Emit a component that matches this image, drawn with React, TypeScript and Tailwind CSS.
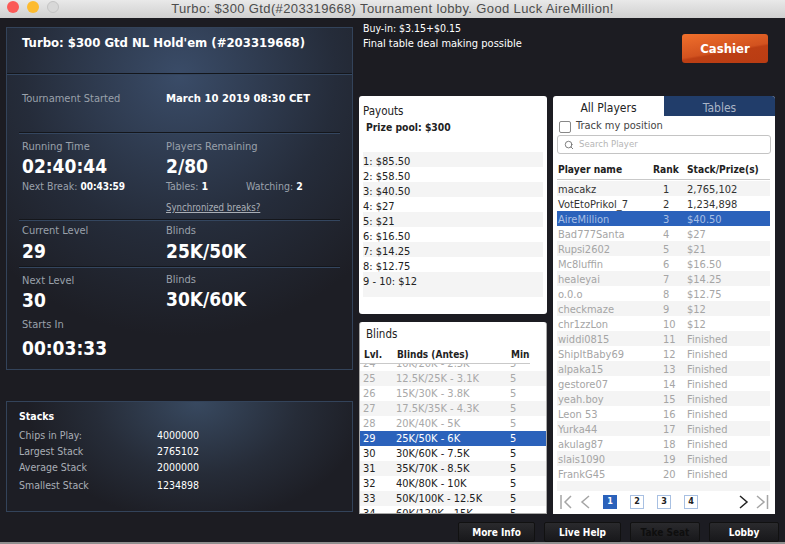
import React from "react";
import { Search } from "lucide-react";

const font = "font-['DejaVu_Sans_Condensed','DejaVu_Sans',sans-serif]";

const payouts = ["1: $85.50", "2: $58.50", "3: $40.50", "4: $27", "5: $21", "6: $16.50", "7: $14.25", "8: $12.75", "9 - 10: $12"];

const blinds = [
  ["24", "10K/20K - 2.5K"],
  ["25", "12.5K/25K - 3.1K"],
  ["26", "15K/30K - 3.8K"],
  ["27", "17.5K/35K - 4.3K"],
  ["28", "20K/40K - 5K"],
  ["29", "25K/50K - 6K"],
  ["30", "30K/60K - 7.5K"],
  ["31", "35K/70K - 8.5K"],
  ["32", "40K/80K - 10K"],
  ["33", "50K/100K - 12.5K"],
  ["34", "60K/120K - 15K"],
];

const players = [
  ["macakz", "2,765,102"],
  ["VotEtoPrikol_7", "1,234,898"],
  ["AireMillion", "$40.50"],
  ["Bad777Santa", "$27"],
  ["Rupsi2602", "$21"],
  ["Mc8luffin", "$16.50"],
  ["healeyai", "$14.25"],
  ["o.0.o", "$12.75"],
  ["checkmaze", "$12"],
  ["chr1zzLon", "$12"],
  ["widdi0815", "Finished"],
  ["ShipItBaby69", "Finished"],
  ["alpaka15", "Finished"],
  ["gestore07", "Finished"],
  ["yeah.boy", "Finished"],
  ["Leon 53", "Finished"],
  ["Yurka44", "Finished"],
  ["akulag87", "Finished"],
  ["slais1090", "Finished"],
  ["FrankG45", "Finished"],
];

function Divider() {
  return <div className="mx-[12px] h-[2px] shrink-0 border-t border-[#14161b] border-b border-b-[#34465f]" />;
}

function Label({ children }: { children: React.ReactNode }) {
  return <div className="text-[11px] leading-[14px] text-[#9aa1ab]">{children}</div>;
}

function Big({ children }: { children: React.ReactNode }) {
  return <div className="text-[19px] leading-[24px] font-bold text-white">{children}</div>;
}

function Stack({ label, value, cls }: { label: string; value: string; cls: string }) {
  return (
    <div className={`flex text-[10.5px] leading-[14px] ${cls}`}>
      <span className="w-[138px] text-[#a9aeb6]">{label}</span>
      <span className="text-white">{value}</span>
    </div>
  );
}

function FootButton({ label, cls }: { label: string; cls: string }) {
  return (
    <div className={`flex h-[20px] items-center justify-center rounded-[2px] border border-[#111] bg-gradient-to-b from-[#2a2a2d] to-[#18181b] text-[10px] ${cls}`}>
      {label}
    </div>
  );
}

export default function App() {
  return (
    <div className={`flex h-[544px] w-[785px] flex-col overflow-hidden bg-[#1c1c22] ${font}`}>
      {/* title bar */}
      <div className="relative flex h-[18px] shrink-0 items-center justify-center bg-gradient-to-b from-[#e9e9e9] to-[#d0d0d0] pb-[1px] font-['Liberation_Sans',sans-serif] text-[13px] tracking-[0.37px] text-[#4d4d4d]">
        <div className="absolute left-[7px] top-[1px] flex gap-[8px]">
          <span className="h-[12px] w-[12px] rounded-full bg-[#fb5a57]" />
          <span className="h-[12px] w-[12px] rounded-full bg-[#fdbb2f]" />
          <span className="h-[12px] w-[12px] rounded-full border border-[#c4c4c4] bg-[#d8d8d8]" />
        </div>
        Turbo: $300 Gtd(#203319668) Tournament lobby. Good Luck AireMillion!
      </div>

      <div className="flex min-h-0 flex-1">
        {/* left column */}
        <div className="ml-[6px] flex w-[347px] shrink-0 flex-col pt-[9px]">
          <div className="flex h-[343px] flex-col border border-[#33435a] bg-[radial-gradient(ellipse_260px_260px_at_50%_14%,#3a4c68_0%,#252c3a_60%,#1d1e25_100%)]">
            <div className="h-[45px] shrink-0 pl-[15px] pt-[6px] text-[13px] leading-[18px] font-bold text-white">
              Turbo: $300 Gtd NL Hold'em (#203319668)
            </div>
            <div className="h-[2px] shrink-0 border-t border-[#14161b] border-b border-b-[#34465f]" />
            <div className="flex h-[57px] shrink-0 pl-[15px] pt-[17px]">
              <div className="w-[144px]"><Label>Tournament Started</Label></div>
              <div className="text-[11.2px] leading-[14px] font-bold text-white">March 10 2019 08:30 CET</div>
            </div>
            <Divider />
            <div className="flex h-[85px] shrink-0 pl-[15px] pt-[6px]">
              <div className="w-[144px]">
                <Label>Running Time</Label>
                <Big>02:40:44</Big>
                <div className="pt-[1px] text-[10.5px] leading-[14px] text-[#9aa1ab]">
                  Next Break: <span className="text-[10px] font-bold text-white">00:43:59</span>
                </div>
              </div>
              <div className="w-[170px]">
                <Label>Players Remaining</Label>
                <Big>2/80</Big>
                <div className="flex pt-[1px] text-[10.5px] leading-[14px] text-[#9aa1ab]">
                  <span className="w-[80px]">Tables: <span className="font-bold text-white">1</span></span>
                  <span>Watching: <span className="font-bold text-white">2</span></span>
                </div>
                <div className="mt-[8px] text-[9.6px] leading-[13px] text-[#a9aeb6] underline">Synchronized breaks?</div>
              </div>
            </div>
            <Divider />
            <div className="flex h-[45px] shrink-0 pl-[15px] pt-[3px]">
              <div className="w-[144px]">
                <Label>Current Level</Label>
                <div className="mt-[1px]"><Big>29</Big></div>
              </div>
              <div>
                <Label>Blinds</Label>
                <div className="mt-[1px]"><Big>25K/50K</Big></div>
              </div>
            </div>
            <Divider />
            <div className="flex flex-col pl-[15px] pt-[5px]">
              <div className="flex">
                <div className="w-[144px] pt-[1px]">
                  <Label>Next Level</Label>
                  <Big>30</Big>
                </div>
                <div>
                  <Label>Blinds</Label>
                  <Big>30K/60K</Big>
                </div>
              </div>
              <div className="mt-[6px]"><Label>Starts In</Label></div>
              <div className="mt-[4px]"><Big>00:03:33</Big></div>
            </div>
          </div>

          <div className="mt-[31px] h-[111px] border border-[#33435a] bg-[radial-gradient(ellipse_170px_120px_at_55%_0%,#384960_0%,#262c38_60%,#1d1e25_100%)] pl-[12px] pt-[7px]">
            <div className="mb-[4px] text-[10.5px] leading-[15px] font-bold text-white">Stacks</div>
            <Stack label="Chips in Play:" value="4000000" cls="h-[16px]" />
            <Stack label="Largest Stack" value="2765102" cls="h-[16px]" />
            <Stack label="Average Stack" value="2000000" cls="h-[18px]" />
            <Stack label="Smallest Stack" value="1234898" cls="h-[16px]" />
          </div>
        </div>

        {/* right area */}
        <div className="ml-[6px] flex min-w-0 flex-1 flex-col">
          <div className="flex h-[78px] shrink-0 text-white">
            <div className="w-[323px] pl-[4px] pt-[3px] text-[11px] leading-[15px]">
              <div className="h-[15px] text-[10.5px]">Buy-in: $3.15+$0.15</div>
              <div>Final table deal making possible</div>
            </div>
            <div className="mt-[16px] flex h-[29px] w-[86px] items-center justify-center rounded-[3px] bg-[linear-gradient(170deg,#f0702c_0%,#d2521f_55%,#bd3f14_60%,#b93c13_100%)] text-[13px] font-bold text-white">
              Cashier
            </div>
          </div>

          <div className="flex h-[418px] shrink-0 gap-[6px]">
            <div className="flex w-[188px] flex-col gap-[8px]">
              {/* payouts */}
              <div className="h-[218px] shrink-0 rounded-[3px] bg-white px-[4px] pt-[8px] text-[#222]">
                <div className="text-[11.5px] leading-[15px]">Payouts</div>
                <div className="ml-[3px] text-[10.3px] leading-[17px] font-bold">Prize pool: $300</div>
                <div className="mt-[16px] text-[11px]">
                  {payouts.map((p, i) => (
                    <div key={p} className={`h-[15px] leading-[19px] ${i % 2 === 0 ? "bg-[#f4f4f4]" : ""}`}>{p}</div>
                  ))}
                  <div className="h-[10px] bg-[#f4f4f4]" />
                </div>
              </div>
              {/* blinds */}
              <div className="flex h-[192px] flex-col overflow-hidden rounded-t-[3px] border-x border-b border-[#a8a8a8] border-t-0 bg-white text-[11px]">
                <div className="ml-[6px] h-[22px] shrink-0 pt-[5px] text-[11.5px] leading-[15px] text-[#222]">Blinds</div>
                <div className="flex h-[20px] w-[170px] shrink-0 items-center border-b border-[#c9c9c9] pl-[4px] pt-[1px] text-[10px] font-bold text-[#222]">
                  <span className="w-[33px]">Lvl.</span>
                  <span className="w-[114px]">Blinds (Antes)</span>
                  <span className="w-[19px] overflow-hidden whitespace-nowrap">Minutes</span>
                </div>
                <div className="min-h-0 flex-1 overflow-hidden">
                  <div className="mt-[-8px]">
                    {blinds.map(([lvl, b], i) => {
                      const active = lvl === "29";
                      const past = i < 5;
                      const shaded = lvl === "25" || lvl === "27" || lvl === "31" || lvl === "33";
                      return (
                        <div
                          key={lvl}
                          className={`flex h-[15px] items-center pl-[3px] pt-[2px] ${
                            active ? "bg-[#2b62bb] text-white" : past ? "text-[#a8a8a8]" : "text-[#222]"
                          } ${shaded ? "bg-[#f4f4f4]" : ""}`}
                        >
                          <span className="w-[33px]">{lvl}</span>
                          <span className="w-[114px]">{b}</span>
                          <span>5</span>
                        </div>
                      );
                    })}
                  </div>
                </div>
              </div>
            </div>

            {/* players */}
            <div className="flex h-[418px] w-[222px] flex-col overflow-hidden rounded-t-[3px] bg-white text-[11px]">
              <div className="flex h-[20px] shrink-0 text-[12px]">
                <div className="flex w-[111px] items-center justify-center pt-[3px] text-[#222]">All Players</div>
                <div className="flex flex-1 items-center justify-center bg-[#213d6a] pt-[3px] text-[#a9b4c6]">Tables</div>
              </div>
              <div className="flex h-[19px] shrink-0 items-center pl-[6px] pt-[2px] text-[#444]">
                <span className="mr-[5px] h-[12px] w-[12px] rounded-[2px] border border-[#888] bg-white" />
                Track my position
              </div>
              <div className="mx-[4px] flex h-[19px] shrink-0 items-center rounded-[3px] border border-[#c4c4c4] pl-[6px] text-[9.5px] text-[#b5b5b5]">
                <Search size={10} className="mr-[5px] text-[#666]" />
                Search Player
              </div>
              <div className="ml-[4px] mt-[6px] flex h-[20px] w-[213px] shrink-0 items-center border-b border-[#c9c9c9] text-[10.2px] font-bold text-[#222]">
                <span className="w-[96px] pl-[1px]">Player name</span>
                <span className="w-[34px]">Rank</span>
                <span>Stack/Prize(s)</span>
              </div>
              <div className="ml-[4px] mt-[1px] w-[213px]">
                {players.map(([name, prize], i) => {
                  const active = name === "AireMillion";
                  const top = i < 2;
                  return (
                    <div
                      key={name}
                      className={`flex h-[15px] items-center pt-[4px] ${
                        active ? "bg-[#2b62bb] text-[#a8bfe4]" : i % 2 === 0 ? "bg-[#f4f4f4]" : ""
                      } ${!active && top ? "text-[#333]" : ""} ${!active && !top ? "text-[#a5a5a5]" : ""}`}
                    >
                      <span className="w-[96px] pl-[1px]">{name}</span>
                      <span className="w-[34px] pl-[10px]">{i + 1}</span>
                      <span>{prize}</span>
                    </div>
                  );
                })}
                <div className="h-[10px] bg-[#f4f4f4]" />
              </div>
              <div className="mt-[4px] flex items-center pl-[7px]">
                <svg className="shrink-0" width="43" height="14" viewBox="0 0 43 14" fill="none" stroke="#a5a5a5" strokeWidth="1.5">
                  <path d="M1 0v14M11 1 5 7l6 6" />
                  <path d="M29 1l-7 6 7 6" />
                </svg>
                <div className="flex gap-[13px] text-[9px] font-bold">
                  <span className="flex h-[14px] w-[14px] items-center justify-center bg-[#2b62bb] text-white">1</span>
                  <span className="flex h-[14px] w-[14px] items-center justify-center border border-[#a8c0e2] text-[#222]">2</span>
                  <span className="flex h-[14px] w-[14px] items-center justify-center border border-[#a8c0e2] text-[#222]">3</span>
                  <span className="flex h-[14px] w-[14px] items-center justify-center border border-[#a8c0e2] text-[#222]">4</span>
                </div>
                <svg className="ml-[41px] shrink-0" width="30" height="14" viewBox="0 0 30 14" fill="none" strokeWidth="1.5">
                  <path d="M1 1l7 6-7 6" stroke="#222" />
                  <path d="M18 1l7 6-7 6M28.5 0v14" stroke="#a5a5a5" />
                </svg>
              </div>
            </div>
          </div>

          {/* footer buttons */}
          <div className="mt-[8px] flex gap-[9px] pl-[99px] font-bold text-white">
            <FootButton label="More Info" cls="w-[77px]" />
            <FootButton label="Live Help" cls="w-[77px]" />
            <FootButton label="Take Seat" cls="w-[70px] text-[#0e0e0e]" />
            <FootButton label="Lobby" cls="w-[70px]" />
          </div>
        </div>
      </div>
      <div className="h-[2px] shrink-0 bg-[#8f8f8f]" />
    </div>
  );
}
